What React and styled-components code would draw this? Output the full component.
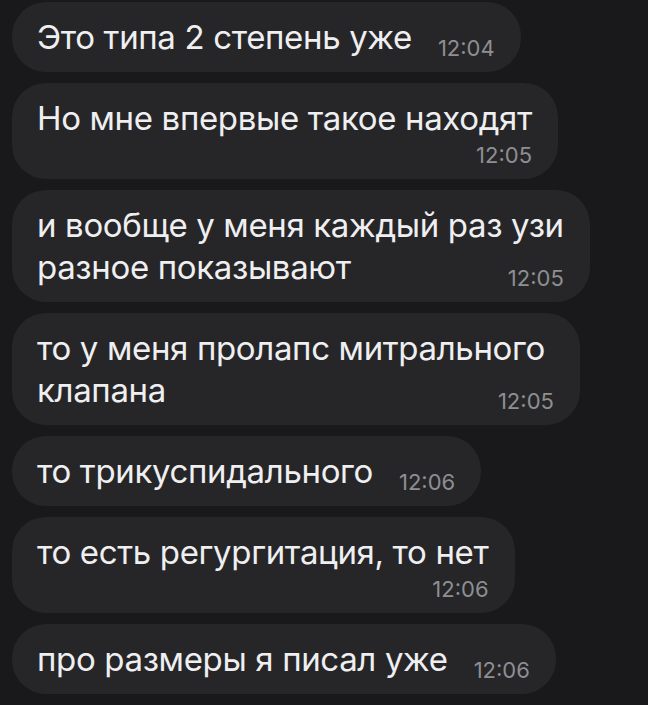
import React from 'react'
import styled, { createGlobalStyle } from 'styled-components'

const GlobalStyle = createGlobalStyle`
  body {
    margin: 0;
    background: #19191b;
    font-family: Inter, "Noto Sans", "Liberation Sans", sans-serif;
  }
`

const Chat = styled.div`
  display: flex;
  flex-direction: column;
  align-items: flex-start;
  gap: 11px;
  padding: 2px 12px;
  height: 705px;
  box-sizing: border-box;
  overflow: hidden;
`

const Bubble = styled.div`
  display: flex;
  flex-direction: column;
  background: #262628;
  border-radius: 34px;
  padding: 14px 26px 14px 25px;
  color: #efeff1;
  font-size: 33px;
  line-height: 42px;
  letter-spacing: -0.35px;
`

const Line = styled.div`
  white-space: pre;
`

const LastLine = styled.div`
  display: flex;
  align-items: flex-end;
  justify-content: space-between;
  gap: 26px;
  white-space: pre;
`

const Time = styled.span`
  color: #8e8e93;
  font-size: 22px;
  line-height: 20px;
  letter-spacing: 0;
  align-self: ${p => (p.$below ? 'flex-end' : 'auto')};
  margin-top: ${p => (p.$below ? 6 : 0)}px;
`

// NBSP at the end of a line keeps the trailing space the original message had
const messages = [
  { lines: ['Это типа 2 степень уже'], time: '12:04' },
  { lines: ['Но мне впервые такое находят'], time: '12:05', below: true },
  { lines: ['и вообще у меня каждый раз узи', 'разное показывают'], time: '12:05' },
  { lines: ['то у меня пролапс митрального\u00a0', 'клапана'], time: '12:05' },
  { lines: ['то трикуспидального'], time: '12:06' },
  { lines: ['то есть регургитация, то нет'], time: '12:06', below: true },
  { lines: ['про размеры я писал уже'], time: '12:06' }
]

const Message = ({ lines, time, below }) => {
  if (below) {
    return (
      <Bubble>
        {lines.map(l => (
          <Line key={l}>{l}</Line>
        ))}
        <Time $below>{time}</Time>
      </Bubble>
    )
  }
  const head = lines.slice(0, -1)
  const last = lines[lines.length - 1]
  return (
    <Bubble>
      {head.map(l => (
        <Line key={l}>{l}</Line>
      ))}
      <LastLine>
        <span>{last}</span>
        <Time>{time}</Time>
      </LastLine>
    </Bubble>
  )
}

export default function App() {
  return (
    <>
      <GlobalStyle />
      <Chat>
        {messages.map((m, i) => (
          <Message key={i} {...m} />
        ))}
      </Chat>
    </>
  )
}
